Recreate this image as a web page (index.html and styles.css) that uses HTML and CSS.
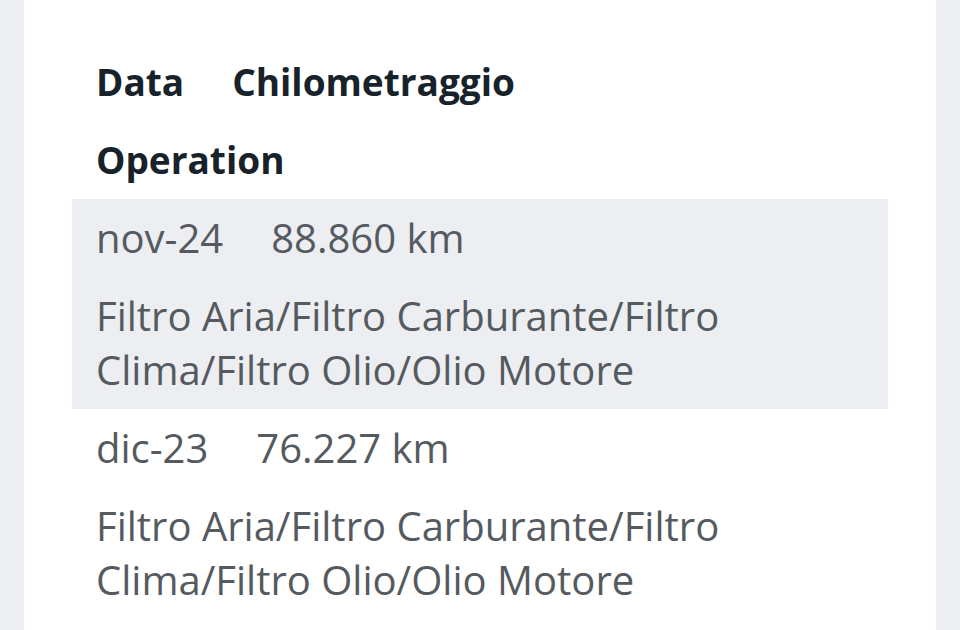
FILE: index.html
```html
<!DOCTYPE html>
<html lang="it">
<head>
<meta charset="utf-8">
<title>Manutenzioni</title>
<link rel="stylesheet" href="styles.css">
</head>
<body>
<main class="card">
  <div class="table">
    <div class="row head">
      <div class="cell">Data</div>
      <div class="cell">Chilometraggio</div>
      <div class="cell full">Operation</div>
    </div>
    <div class="row alt">
      <div class="cell">nov-24</div>
      <div class="cell">88.860 km</div>
      <div class="cell full">Filtro Aria/Filtro Carburante/Filtro Clima/Filtro Olio/Olio Motore</div>
    </div>
    <div class="row">
      <div class="cell">dic-23</div>
      <div class="cell">76.227 km</div>
      <div class="cell full">Filtro Aria/Filtro Carburante/Filtro Clima/Filtro Olio/Olio Motore</div>
    </div>
  </div>
</main>
</body>
</html>
```

FILE: styles.css
```css
html, body {
  margin: 0;
  padding: 0;
  background: #eceef1;
  height: 100%;
  overflow: hidden;
}
body {
  padding: 0 24px;
  font-family: "Open Sans", "Noto Sans", sans-serif;
}
.card {
  background: #ffffff;
  min-height: 100%;
  padding: 43px 48px 0;
  box-sizing: border-box;
}
.row {
  display: flex;
  flex-wrap: wrap;
}
.row.alt {
  background: #eceef1;
}
.cell {
  padding: 12px 24px;
  font-size: 40px;
  font-weight: 500;
  line-height: 54px;
  color: #555a60;
}
.cell.full {
  flex-basis: 100%;
  box-sizing: border-box;
}
.head .cell {
  font-weight: 700;
  color: #17222a;
  font-size: 37px;
}
```
